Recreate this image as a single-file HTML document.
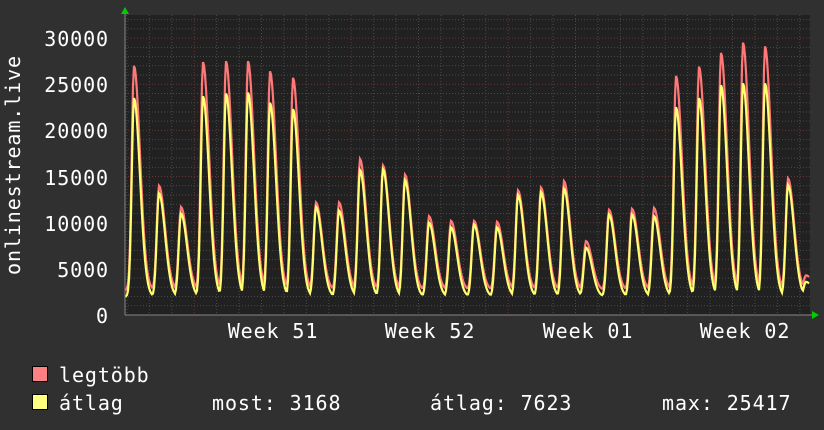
<!DOCTYPE html>
<html><head><meta charset="utf-8"><style>
html,body{margin:0;padding:0;background:#303030;}
svg{display:block}
text{font-family:"DejaVu Sans Mono","Liberation Mono",monospace;fill:#fff;letter-spacing:0.9px}
</style></head><body>
<svg id="s" width="824" height="430" xmlns="http://www.w3.org/2000/svg">
<rect width="824" height="430" fill="#303030"/>
<rect x="125" y="15" width="685" height="300" fill="#212121"/>
<g id="grid"></g>
<g id="data"></g>
<line x1="125" y1="315" x2="813" y2="315" stroke="#888" stroke-width="1"/>
<line x1="125" y1="315" x2="125" y2="12" stroke="#888" stroke-width="1"/>
<polygon points="121,14 129,14 125,7" fill="#00cc00"/>
<polygon points="812,311 812,319 819,315" fill="#00cc00"/>
<g font-size="20" text-anchor="end">
<text x="109" y="46">30000</text>
<text x="109" y="92">25000</text>
<text x="109" y="138">20000</text>
<text x="109" y="185">15000</text>
<text x="109" y="231">10000</text>
<text x="109" y="277">5000</text>
<text x="109" y="323">0</text>
</g>
<text transform="translate(20,165) rotate(-90)" font-size="20" text-anchor="middle">onlinestream.live</text>
<g font-size="20" text-anchor="middle">
<text x="273" y="338">Week 51</text>
<text x="430" y="338">Week 52</text>
<text x="588" y="338">Week 01</text>
<text x="745" y="338">Week 02</text>
</g>
<rect x="32.5" y="366.5" width="15" height="15" fill="#ff8080" stroke="#000"/>
<rect x="32.5" y="394.5" width="15" height="15" fill="#ffff80" stroke="#000"/>
<g font-size="20">
<text x="59" y="382">legtöbb</text>
<text x="59" y="410">átlag</text>
<text x="212" y="410">most: 3168</text>
<text x="430" y="410">átlag: 7623</text>
<text x="662" y="410">max: 25417</text>
</g>
</svg>
<script>
var NS="http://www.w3.org/2000/svg";
function el(t,a,p){var e=document.createElementNS(NS,t);for(var k in a)e.setAttribute(k,a[k]);p.appendChild(e);return e;}
var g=document.getElementById("grid");
function Y(v){return 315-v*276.9/30000;}
for(var v=1000;v<=32000;v+=1000){var y=Y(v);if(y<15)break;
 el("line",{x1:125,x2:810,y1:y,y2:y,stroke:v%5000==0?"#6a3434":"#4a4a4a","stroke-dasharray":"1,2"},g);}
for(var x=126.9;x<810;x+=22.43){var wk=[194.3,351.3,508.3,665.3].some(function(w){return Math.abs(w-x)<2;});
 el("line",{x1:x,x2:x,y1:15,y2:315,stroke:wk?"#6a3434":"#4a4a4a","stroke-dasharray":"1,2"},g);}
var px=[134,159,181,203,226,248,270,293,316,339,360,383,405,429,451,474,497,518,541,564,586,609,632,654,676,699,721,743,765,788,806];
var mx=[27000,14000,11700,27400,27500,27500,26400,25700,12200,12200,16900,16200,15200,10700,10200,10200,10100,13500,13800,14500,8000,11400,11500,11600,25900,26900,28400,29500,29100,14800,4300];
var av=[23500,13200,11000,23700,24000,24100,23000,22300,11700,11300,15700,15800,14600,10000,9500,9800,9500,13000,13300,13700,7300,10900,10900,10700,22500,23500,24900,25100,25100,14100,3600];
function series(pk,base){var pts=[];for(var x=125;x<=809;x+=1){var best=0;
 for(var i=0;i<px.length;i++){var d=x-px[i];var f;
  if(d<0)f=Math.exp(-Math.pow(d/3.2,2));else f=Math.exp(-Math.pow(d/8.5,2));
  var c=f*(pk[i]-base);if(c>best)best=c;}
 pts.push(x+","+Y(base+best).toFixed(1));}
 return pts.join(" ");}
var d=document.getElementById("data");
el("polyline",{points:series(mx,2700),fill:"none",stroke:"#ff7878","stroke-width":2.2},d);
el("polyline",{points:series(av,2000),fill:"none",stroke:"#ffff70","stroke-width":2.2},d);
</script>
</body></html>
